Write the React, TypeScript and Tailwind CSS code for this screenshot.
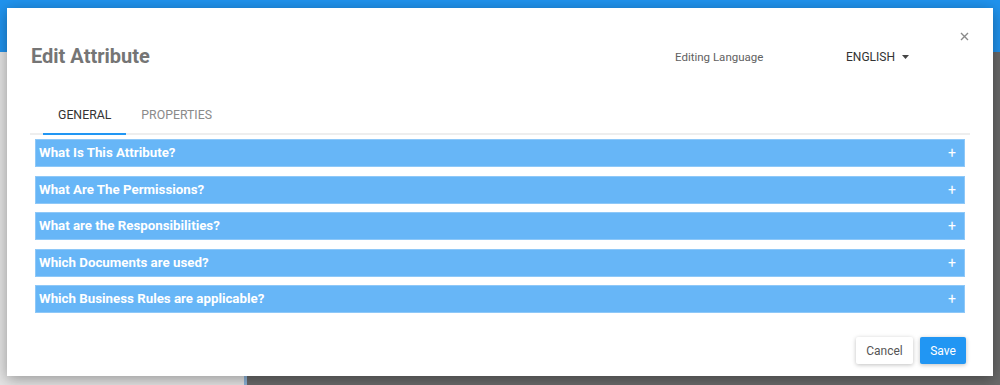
const SECTIONS = [
  'What Is This Attribute?',
  'What Are The Permissions?',
  'What are the Responsibilities?',
  'Which Documents are used?',
  'Which Business Rules are applicable?',
]

function CloseIcon() {
  return (
    <svg width="9" height="9" viewBox="0 0 9 9" className="text-[#8a8a8a]">
      <path d="M1 1L8 8M8 1L1 8" stroke="currentColor" strokeWidth="1.4" />
    </svg>
  )
}

function Section({ title }: { title: string }) {
  return (
    <div className="flex h-[28px] items-center justify-between border border-[#8ec8f8] bg-[#67b6f7] pl-[3px] pr-[8px] text-white">
      <span className="text-[13.3px] font-bold">{title}</span>
      <span className="text-[14px] leading-none">+</span>
    </div>
  )
}

export default function App() {
  return (
    <div className="relative h-[385px] w-[1000px] overflow-hidden font-['Roboto',sans-serif]">
      {/* app behind the modal */}
      <div className="flex h-full flex-col">
        <div className="h-[52px] bg-[#2093ee]" />
        <div className="flex flex-1">
          <div className="w-[247px] border-r-[3px] border-[#8db3d8] bg-[#e4e4e4]" />
          <div className="flex-1 bg-[#6a6a6a]" />
        </div>
      </div>

      {/* dialog */}
      <div className="absolute left-[7px] top-[8px] flex h-[368px] w-[986px] flex-col bg-white shadow-[0_3px_14px_rgba(0,0,0,0.35)]">
        <button className="absolute right-[23px] top-[23px] p-[1px]">
          <CloseIcon />
        </button>

        <div className="flex items-center pl-[24px] pt-[36px]">
          <h2 className="w-[644px] text-[20px] font-bold leading-[24px] text-[#757575]">Edit Attribute</h2>
          <span className="mt-[4px] w-[171px] text-[11.5px] text-[#616161]">Editing Language</span>
          <span className="mt-[2px] flex items-center gap-[7px] text-[12px] text-[#333333]">
            ENGLISH
            <svg width="7" height="4" viewBox="0 0 7 4">
              <path d="M0 0H7L3.5 4Z" fill="#444444" />
            </svg>
          </span>
        </div>

        <div className="mx-[23px] mt-[29px] flex border-b-2 border-[#eeeeee] pl-[13px]">
          <div className="-mb-[2px] flex h-[38px] items-center border-b-2 border-[#2196f3] px-[15px] text-[12.3px] text-[#333333]">
            GENERAL
          </div>
          <div className="-mb-[2px] flex h-[38px] items-center border-b-2 border-transparent px-[15px] text-[12.3px] text-[#8a8a8a]">
            PROPERTIES
          </div>
        </div>

        <div className="mt-[4px] flex flex-col gap-[8.5px] px-[28px]">
          {SECTIONS.map((s) => (
            <Section key={s} title={s} />
          ))}
        </div>

        <div className="mt-auto flex justify-end gap-[7px] pb-[12px] pr-[27px]">
          <button className="h-[27px] w-[57px] rounded-[2px] bg-white text-[12px] text-[#555555] shadow-[0_1px_4px_rgba(0,0,0,0.25)]">
            Cancel
          </button>
          <button className="h-[27px] w-[46px] rounded-[2px] bg-[#2196f3] text-[12px] text-white shadow-[0_1px_4px_rgba(0,0,0,0.25)]">
            Save
          </button>
        </div>
      </div>
    </div>
  )
}
